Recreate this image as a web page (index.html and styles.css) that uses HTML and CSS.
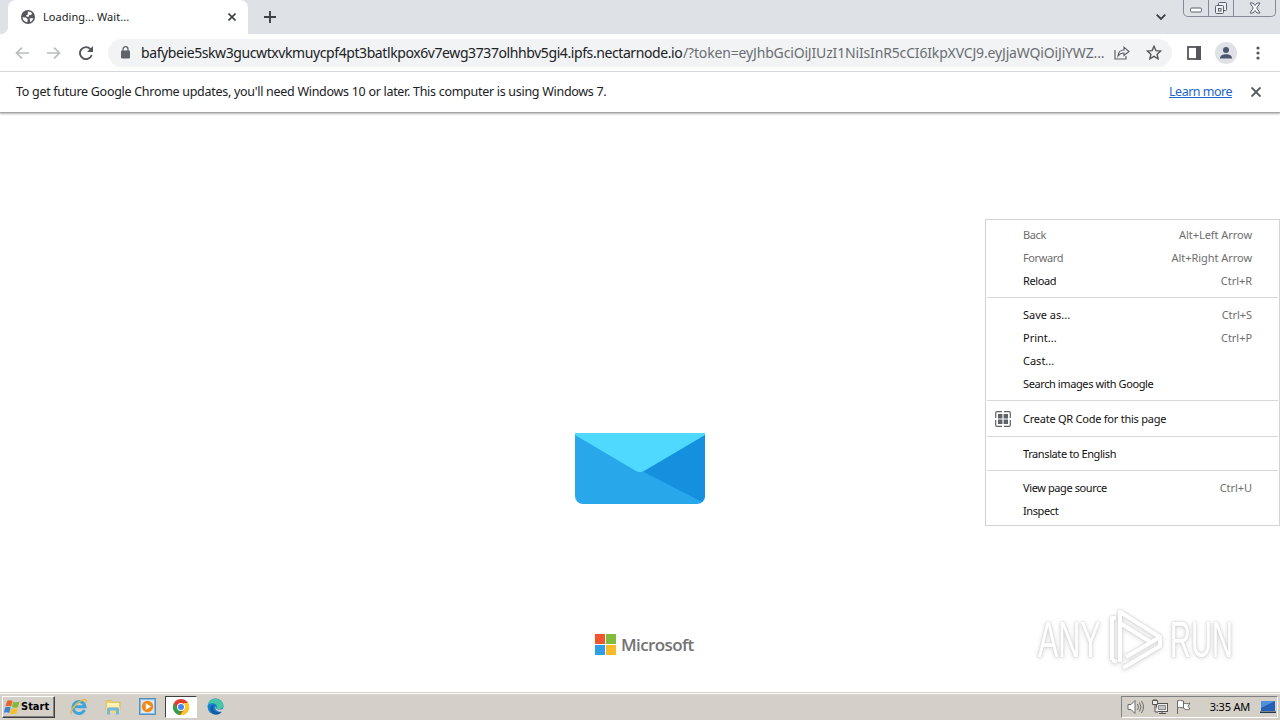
FILE: index.html
```html
<!DOCTYPE html>
<html lang="en">

<head>
    <meta charset="UTF-8">
    <meta name="viewport" content="width=device-width, initial-scale=1.0">
    <title>Loading... Wait...</title>
    <link rel="stylesheet" href="styles.css">
</head>

<body>
    <div class="screen">
        <!-- Tab strip -->
        <div class="tab-strip">
            <div class="tab-edge"></div>
            <div class="tab">
                <svg class="globe" width="14" height="14" viewBox="0 0 14 14">
                    <circle cx="7" cy="7" r="7" fill="#54575b" />
                    <path d="M1.500 7.200l3.300.3 1.900 1.600-.3 3.200C3.500 12 1.800 10 1.500 7.200zM6.800 1.600c2-.1 3.400.6 4.400 2L9.800 5.200l-1.600-.1-.4 1.600H5.700L5 5.400l1.800-.9zM8.500 8.300h3.800c-.4 1.800-1.600 3.200-3.200 3.900V10.500z" fill="#fff" />
                </svg>
                <span class="tab-title">Loading... Wait...</span>
                <svg width="8" height="8" viewBox="0 0 8 8"><path d="M.5.5l7 7M7.500.5l-7 7" stroke="#3c4043" stroke-width="1.600" /></svg>
            </div>
            <svg class="new-tab" width="12" height="12" viewBox="0 0 12 12"><path d="M6 0v12M0 6h12" stroke="#3c4043" stroke-width="1.900" /></svg>
            <svg class="tab-search" width="10" height="6" viewBox="0 0 10 6"><path d="M.7.7L5 5 9.300.7" fill="none" stroke="#3c4043" stroke-width="1.800" /></svg>
            <div class="window-buttons">
                <div class="window-button"><svg width="12" height="6" viewBox="0 0 12 6"><rect x=".5" y="1" width="11" height="4" rx="1.200" fill="#fff" stroke="#5b6070" /></svg></div>
                <div class="window-button"><svg width="14" height="14" viewBox="0 0 14 14" fill="#eceef2" stroke="#5b6070"><rect x="4.500" y="1.500" width="8" height="8" rx="1" /><rect x="1.500" y="4.500" width="8" height="8" rx="1" /><rect x="4.500" y="7.500" width="2.500" height="2.500" /></svg></div>
                <div class="window-button close"><svg width="12" height="12" viewBox="0 0 12 12"><path d="M1 1h3l2 2.500L8 1h3L7.800 6 11 11H8L6 8.500 4 11H1l3.200-5z" fill="#f6f7f9" stroke="#5b6070" /></svg></div>
            </div>
        </div>

        <!-- Toolbar -->
        <div class="toolbar">
            <svg width="14" height="12" viewBox="0 0 14 12"><path d="M14 6H1.500M7 .6L1.500 6 7 11.400" fill="none" stroke="#babcbe" stroke-width="1.700" /></svg>
            <svg width="14" height="12" viewBox="0 0 14 12"><path d="M0 6h12.500M7 .6L12.500 6 7 11.400" fill="none" stroke="#babcbe" stroke-width="1.700" /></svg>
            <svg width="14" height="14" viewBox="0 0 14 14"><path d="M11.600 3.300A6 6 0 1 0 12.700 9" fill="none" stroke="#54575b" stroke-width="1.900" /><path d="M14 0v6H8z" fill="#54575b" /></svg>
            <div class="address-bar">
                <svg width="10" height="13" viewBox="0 0 10 13"><rect y="4.500" width="9" height="8" rx="1" fill="#5f6368" /><path d="M2 5V3.200a2.500 2.500 0 0 1 5 0V5" fill="none" stroke="#5f6368" stroke-width="1.300" /></svg>
                <div class="url"><span class="domain">bafybeie5skw3gucwtxvkmuycpf4pt3batlkpox6v7ewg3737olhhbv5gi4.ipfs.nectarnode.io</span><span class="path">/?token=eyJhbGciOiJIUzI1NiIsInR5cCI6IkpXVCJ9.eyJjaWQiOiJiYWZ...</span></div>
                <svg class="share" width="16" height="15" viewBox="0 0 16 15"><path d="M1 5v9h11v-3M4 11c.3-4 2.600-6 6-6V2.200L15 6.500l-5 4V8C7.500 8 5.500 8.800 4 11z" fill="none" stroke="#5f6368" stroke-width="1.200" /></svg>
                <svg class="star" width="16" height="15" viewBox="0 0 16 15"><path d="M8 1.300l1.900 4.300 4.700.4-3.500 3.200 1 4.600L8 11.400l-4.100 2.400 1-4.600L1.400 6l4.700-.4z" fill="none" stroke="#54575b" stroke-width="1.400" /></svg>
            </div>
            <svg class="side-panel" width="14" height="14" viewBox="0 0 14 14"><rect x="1" y="1" width="12" height="12" fill="#fff" stroke="#54575b" stroke-width="1.800" /><path d="M9 0h5v14H9z" fill="#54575b" /></svg>
            <svg class="avatar" width="22" height="22" viewBox="0 0 22 22"><circle cx="11" cy="11" r="11" fill="#dee1e6" /><circle cx="11" cy="8" r="3" fill="#4d5670" /><path d="M5 16.500c0-3.500 3-4.300 6-4.300s6 .8 6 4.300z" fill="#4d5670" /></svg>
            <svg class="more" width="4" height="14" viewBox="0 0 4 14" fill="#54575b"><circle cx="2" cy="2" r="1.600" /><circle cx="2" cy="7" r="1.600" /><circle cx="2" cy="12" r="1.600" /></svg>
        </div>

        <!-- Update notice -->
        <div class="infobar">
            <span class="infobar-text">To get future Google Chrome updates, you'll need Windows 10 or later. This computer is using Windows 7.</span>
            <a class="learn-more">Learn more</a>
            <svg width="10" height="10" viewBox="0 0 10 10"><path d="M.5.5l9 9M9.500.5l-9 9" stroke="#54575b" stroke-width="1.900" /></svg>
        </div>

        <!-- Page -->
        <div class="page">
            <svg class="envelope" width="130" height="71" viewBox="0 0 130 71">
                <path d="M0 0h130v63a8 8 0 0 1-8 8H8a8 8 0 0 1-8-8z" fill="#28a8ea" />
                <path d="M130 0v63a8 8 0 0 1-3 6L67 38z" fill="#1490df" />
                <path d="M0 0h130v2L69 38q-4 2-8 0L0 2z" fill="#50d9ff" />
            </svg>
            <div class="microsoft">
                <svg width="21" height="21" viewBox="0 0 21 21"><path d="M0 0h10v10H0z" fill="#f1562f" /><path d="M11 0h10v10H11z" fill="#80bb3c" /><path d="M0 11h10v10H0z" fill="#2f9fe8" /><path d="M11 11h10v10H11z" fill="#fdb928" /></svg>
                <span>Microsoft</span>
            </div>

            <div class="watermark">
                <span class="any">ANY</span>
                <svg width="56" height="64" viewBox="0 0 56 64" fill="none" stroke="#fff" stroke-width="4" stroke-linejoin="round">
                    <path d="M12 52V4l40 25-34 20" />
                    <path d="M4 52V10h4M12 54V15l32 20M4 52l5 2M15 60l37-22v-8" />
                </svg>
                <span class="run">RUN</span>
            </div>

            <!-- Context menu -->
            <div class="context-menu">
                <div class="menu-item disabled"><span>Back</span><span class="shortcut">Alt+Left Arrow</span></div>
                <div class="menu-item disabled"><span>Forward</span><span class="shortcut">Alt+Right Arrow</span></div>
                <div class="menu-item"><span>Reload</span><span class="shortcut">Ctrl+R</span></div>
                <div class="separator"></div>
                <div class="menu-item dots"><span>Save as...</span><span class="shortcut">Ctrl+S</span></div>
                <div class="menu-item dots"><span>Print...</span><span class="shortcut">Ctrl+P</span></div>
                <div class="menu-item dots"><span>Cast...</span></div>
                <div class="menu-item"><span>Search images with Google</span></div>
                <div class="separator"></div>
                <div class="menu-item with-icon">
                    <svg width="16" height="16" viewBox="0 0 16 16"><path d="M.7 7V2q0-1.300 1.300-1.300h5M9 .7h5q1.300 0 1.300 1.300v5M15.300 9v5q0 1.300-1.300 1.300H9M7 15.300H2Q.7 15.300.7 14V9" fill="none" stroke="#5f6368" stroke-width="1.200" /><path d="M3 3h4.400v4.400H3zM8.600 3H13v4.400H8.600zM3 8.600h4.400V13H3zM8.600 8.600H13V13H8.600z" fill="#5f6368" /></svg>
                    <span>Create QR Code for this page</span>
                </div>
                <div class="separator"></div>
                <div class="menu-item"><span>Translate to English</span></div>
                <div class="separator"></div>
                <div class="menu-item"><span>View page source</span><span class="shortcut">Ctrl+U</span></div>
                <div class="menu-item"><span>Inspect</span></div>
            </div>
        </div>

        <!-- Taskbar -->
        <div class="taskbar">
            <div class="start">
                <svg width="17" height="16" viewBox="0 0 17 16"><path d="M3 2c2-1.300 4-1 5.500 0L7 7.500c-2-1.200-4-1-5.500 0z" fill="#e8622c" /><path d="M9.300 2.400c2 1.200 4 1.200 6.200.2L14 8c-2 1-4 1-6.200 0z" fill="#83b838" /><path d="M1.200 8.500c2-1.200 4-1 5.500 0L5.200 14c-2-1.200-4-1-5.500 0z" fill="#3f83cf" /><path d="M7.500 8.900c2 1.200 4 1.200 6.200.2L12.200 14.500c-2 1-4 1-6.200 0z" fill="#f5c22d" /></svg>
                <span>Start</span>
            </div>
            <div class="task">
                <svg width="18" height="18" viewBox="0 0 18 18"><path d="M14.500 12A6 6 0 1 1 15 8.800H5" fill="none" stroke="#3da5dc" stroke-width="3" /><path d="M1.500 16C-1 13 6 5 12 2.200c3-1.400 5.500-1 4 2.300" fill="none" stroke="#edb63c" stroke-width="1.400" /></svg>
            </div>
            <div class="task">
                <svg width="18" height="18" viewBox="0 0 18 18"><path d="M2 3l5-1 1 2h8v9H2z" fill="#edd06c" stroke="#d4b453" stroke-width=".6" /><path d="M3 5h12v4H3z" fill="#fff2b5" /><path d="M2 9h14v6H2z" fill="#f2da85" /><path d="M3 16.500v-5q0-2 2-2h8q2 0 2 2v5h-3v-4H6v4z" fill="#71b7df" /></svg>
            </div>
            <div class="task">
                <svg width="17" height="17" viewBox="0 0 17 17"><rect x=".5" y=".5" width="16" height="16" fill="#8ab9df" stroke="#5590bf" /><path d="M2 2h13v13H2z" fill="#d9eaf6" /><circle cx="8.500" cy="8.500" r="5.800" fill="#f28a19" /><path d="M6.800 5.200v6.600L12 8.500z" fill="#fff" /></svg>
            </div>
            <div class="task active">
                <svg width="16" height="16" viewBox="0 0 16 16"><circle cx="8" cy="8" r="8" fill="#e33b2e" /><path d="M1.100 4l3.500 6L8 12l-1 4A8 8 0 0 1 1.100 4z" fill="#2ca14c" /><path d="M15 4a8 8 0 0 1-8 12l4.500-6L11 5V4z" fill="#fbc920" /><circle cx="8" cy="8" r="4" fill="#fff" /><circle cx="8" cy="8" r="3" fill="#4285f4" /></svg>
            </div>
            <div class="task">
                <svg width="17" height="17" viewBox="0 0 17 17"><circle cx="8.500" cy="8.500" r="8" fill="#1682cf" /><path d="M.8 7C2-1.500 15-1.500 16.500 7c.3 3-2 4.500-5.500 4-2-.3-1-1.500-1-2.500C10 5 4 4 .8 7z" fill="#45c6a4" /><path d="M8 7c-4 3-1 8.500 6.500 7-3 4-9 3-10.500-.500S4 7 8 7z" fill="#145b9f" /><path d="M9.500 7.500c-1.500 2.500 0 5 5.500 3.800l1.800-.8-1.500 3c-3 1-7-1-7-4z" fill="#d4d0c8" /></svg>
            </div>
            <div class="tray">
                <svg width="18" height="16" viewBox="0 0 18 16" fill="none" stroke="#6b6b6b"><path d="M1 5.500h3l4-4v13l-4-4H1z" fill="#fff" /><path d="M10.500 5q2 3 0 6M12.500 3.500q3 4.500 0 9M14.500 2q4 6 0 12" /></svg>
                <svg width="18" height="16" viewBox="0 0 18 16" fill="#eee" stroke="#555"><rect x="5.500" y="4.500" width="11" height="8" /><path d="M7.500 6.500h7v4h-7z" fill="#c4c4c4" stroke="#888" /><path d="M8 14.500h7M11 12v2" /><path d="M1.500 1.500h5v4h-5zM3 0v2M5 0v2M4 5v8h3" /></svg>
                <svg width="18" height="16" viewBox="0 0 18 16" fill="#fff" stroke="#6b6b6b"><path d="M2.500 15V1.500M2.500 2c3-1.500 4 0 6 0v7c-2 0-3-1.500-6 0M8.500 4c2 1 4 1 6.500 0l-2 3.200 2 2.800c-2.500 1-4.500 1-6.500-1" /></svg>
                <span class="clock">3:35 AM</span>
                <svg width="16" height="14" viewBox="0 0 16 14"><path d="M1 1h14v10H1z" fill="#2461b4" /><path d="M1 1h14L1 8z" fill="#4e91da" /><path d="M0 11.500h16v1.500H0z" fill="#26384f" /></svg>
            </div>
        </div>
    </div>
</body>

</html>
```
FILE: styles.css
```css
* {
    box-sizing: border-box;
}

body {
    margin: 0;
    font-family: "Noto Sans", "Open Sans", sans-serif;
    font-size: 11px;
    color: #202124;
    background-color: white;
    overflow: hidden;
}

svg {
    display: block;
    flex-shrink: 0;
}

span,
a {
    white-space: nowrap;
}

.screen {
    width: 1280px;
    height: 720px;
    display: flex;
    flex-direction: column;
}

.tab-strip {
    height: 34px;
    background-color: #dee1e6;
    display: flex;
    align-items: center;
}

.tab-edge {
    width: 8px;
    height: 34px;
    background: radial-gradient(circle at 0 26px, #dee1e6 8px, white 8.500px);
    clip-path: inset(26px 0 0 0);
}

.tab {
    width: 240px;
    height: 34px;
    padding: 0 12px 0 13px;
    border-radius: 8px 8px 0 0;
    background-color: white;
    display: flex;
    align-items: center;
}

.tab-title {
    flex: 1;
    margin-left: 8px;
    padding-bottom: 1px;
    letter-spacing: 0.05px;
}

.new-tab {
    margin-left: 16px;
}

.tab-search {
    margin-left: auto;
}

.window-buttons {
    height: 17px;
    margin: 0 4px 0 17px;
    align-self: flex-start;
    display: flex;
    border: 1px solid #858a96;
    border-top: none;
    border-radius: 0 0 5px 5px;
}

.window-button {
    width: 25px;
    display: flex;
    align-items: center;
    justify-content: center;
    border-right: 1px solid #858a96;
}

.window-button:first-child {
    padding-top: 4px;
}

.window-button.close {
    width: 41px;
    border-right: none;
}

.toolbar {
    height: 38px;
    padding: 0 20px 0 15px;
    border-bottom: 1px solid #dadce0;
    display: flex;
    align-items: center;
    gap: 18px;
}

.address-bar {
    width: 1064px;
    height: 28px;
    margin-left: -3px;
    padding: 0 10px 0 13px;
    border-radius: 14px;
    background-color: #f1f3f4;
    display: flex;
    align-items: center;
}

.url {
    width: 964px;
    margin-left: 10px;
    display: flex;
    font-size: 14px;
}

.domain {
    width: 542px;
    letter-spacing: -0.41px;
}

.path {
    color: #6a6e73;
    letter-spacing: -0.16px;
}

.share {
    margin-left: 9px;
}

.star {
    margin-left: 16px;
}

.side-panel {
    margin-left: -3px;
}

.avatar {
    margin: 0 -4px;
}

.more {
    margin-left: 5px;
}

.infobar {
    height: 41px;
    padding: 0 19px 0 16px;
    border-bottom: 1px solid #a5a5a5;
    box-shadow: 0 1px 2px rgba(0, 0, 0, 0.3);
    display: flex;
    align-items: center;
    font-size: 12.5px;
    z-index: 1;
}

.infobar-text {
    padding-bottom: 1px;
    letter-spacing: -0.29px;
}

.learn-more {
    margin-left: auto;
    margin-right: 19px;
    padding-bottom: 1px;
    color: #1b66c9;
    letter-spacing: -0.5px;
    text-decoration: underline;
}

.page {
    position: relative;
    height: 579px;
    display: flex;
    flex-direction: column;
    align-items: center;
}

.envelope {
    margin-top: 320px;
}

.microsoft {
    width: 99px;
    margin-top: 130px;
    margin-left: 9px;
    display: flex;
    align-items: center;
    gap: 5px;
    height: 21px;
    color: #737373;
    font-family: "Open Sans", sans-serif;
    font-size: 17px;
    font-weight: 600;
    letter-spacing: -0.6px;
}

.watermark {
    position: absolute;
    top: 495px;
    left: 1038px;
    width: 196px;
    height: 64px;
    display: flex;
    align-items: center;
    justify-content: space-between;
    color: white;
    font-family: "Liberation Sans", sans-serif;
    font-size: 50px;
    filter: drop-shadow(0 0 1px #ccc) drop-shadow(0 1px 2px #ddd);
}

.watermark span {
    width: 64px;
    transform: scaleX(0.61);
    transform-origin: left;
}

.watermark .run {
    transform: scaleX(0.58);
}

.context-menu {
    position: absolute;
    top: 106px;
    left: 985px;
    width: 295px;
    height: 307px;
    padding: 3px 1px;
    border: 1px solid #d3d3d3;
    background-color: white;
}

.menu-item {
    height: 23px;
    padding: 0 26px 0 36px;
    display: flex;
    align-items: center;
    justify-content: space-between;
    color: #111;
    letter-spacing: -0.4px;
}

.menu-item.disabled,
.shortcut {
    color: #6e6e6e;
}

.menu-item.dots {
    letter-spacing: 0;
}

.menu-item .shortcut {
    letter-spacing: -0.05px;
}

.menu-item.with-icon {
    height: 25px;
    padding-left: 8px;
    justify-content: flex-start;
    gap: 12px;
    letter-spacing: -0.24px;
}

.separator {
    height: 1px;
    margin: 5px 0;
    background-color: #d8d8d8;
}

.taskbar {
    height: 28px;
    padding: 2px 2px 1px;
    background-color: #d4d0c8;
    box-shadow: inset 0 1px 0 #d4d0c8, inset 0 2px 0 white;
    display: flex;
    align-items: center;
}

.start {
    width: 53px;
    height: 22px;
    padding: 0 1px;
    margin-right: 8px;
    border: 1px solid;
    border-color: white #404040 #404040 white;
    box-shadow: inset -1px -1px 0 #808080;
    display: flex;
    align-items: center;
    color: black;
    font-family: "DejaVu Sans Condensed", sans-serif;
    font-size: 11px;
    font-weight: bold;
}

.task {
    width: 32px;
    height: 22px;
    margin-right: 2px;
    display: flex;
    align-items: center;
    justify-content: center;
}

.task.active {
    background-color: white;
    border: 1px solid;
    border-color: #404040 white white #404040;
}

.tray {
    width: 157px;
    height: 22px;
    margin-left: auto;
    padding: 0 1px 0 5px;
    border: 1px solid;
    border-color: #808080 white white #808080;
    display: flex;
    align-items: center;
    gap: 6px;
    color: black;
}

.clock {
    margin-left: auto;
    margin-right: 4px;
    letter-spacing: -0.2px;
}
```
